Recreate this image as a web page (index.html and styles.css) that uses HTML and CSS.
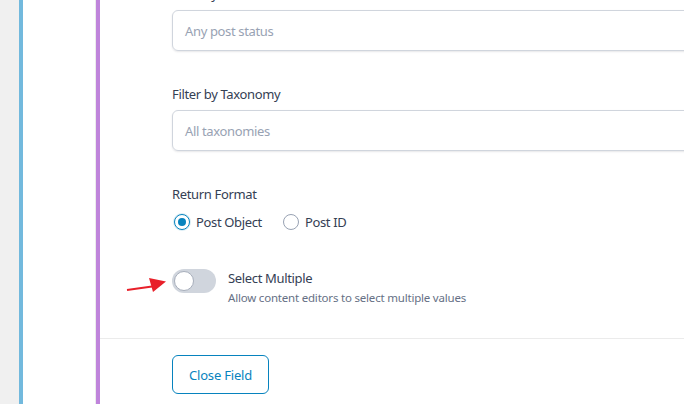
FILE: index.html
```html
<!DOCTYPE html>
<html>
<head>
<meta charset="utf-8">
<link rel="stylesheet" href="styles.css">
</head>
<body>
<div class="page">
  <div class="gutter"></div>
  <div class="outer">
    <div class="rail"></div>
    <div class="panel">
      <div class="fields">
        <div class="field first">
          <div class="label">Filter by Post Status</div>
          <div class="input">Any post status</div>
        </div>
        <div class="field tax">
          <div class="label">Filter by Taxonomy</div>
          <div class="input">All taxonomies</div>
        </div>
        <div class="field format">
          <div class="label">Return Format</div>
          <div class="radios">
            <label class="radio"><span class="dot on"></span>Post Object</label>
            <label class="radio"><span class="dot"></span>Post ID</label>
          </div>
        </div>
        <div class="field multi">
          <span class="toggle"><span class="knob"></span></span>
          <div class="multi-text">
            <div class="multi-title">Select Multiple</div>
            <div class="multi-desc">Allow content editors to select multiple values</div>
          </div>
          <svg class="arrow" width="42" height="20" viewBox="0 0 42 20">
            <path d="M1 15 L26 11.5" stroke="#e8202a" stroke-width="2" fill="none"/>
            <path d="M23 3 L40 6.5 L27 17 Z" fill="#e8202a"/>
          </svg>
        </div>
      </div>
      <div class="footer">
        <button class="close">Close Field</button>
      </div>
    </div>
  </div>
</div>
</body>
</html>
```

FILE: styles.css
```css
* { box-sizing: border-box; }
html, body { margin: 0; padding: 0; background: #fff; }
body {
  font-family: "Noto Sans", "Segoe UI", sans-serif;
  color: #344054;
  width: 684px;
  height: 404px;
  overflow: hidden;
}
.page { display: flex; height: 404px; }
.gutter { width: 19px; background: #f0f0f0; flex: none; }
.outer {
  flex: 1;
  display: flex;
  border-left: 4px solid #72b9dd;
}
.rail {
  width: 73px;
  flex: none;
  border-right: 1px solid #ececec;
}
.panel {
  flex: 1;
  border-left: 4px solid #bf84db;
  display: flex;
  flex-direction: column;
  min-width: 0;
}
.fields { padding-left: 72px; }
.field { position: relative; }
.label {
  font-size: 13px;
  letter-spacing: -0.35px;
  line-height: 20px;
  height: 20px;
}
.first { margin-top: -16px; }
.input {
  margin-top: 6px;
  height: 41px;
  width: 540px;
  border: 1px solid #d0d5dd;
  border-radius: 6px;
  box-shadow: 0 1px 2px rgba(16, 24, 40, 0.1);
  padding: 0 12px;
  font-size: 13px;
  letter-spacing: -0.35px;
  line-height: 40px;
  color: #98a2b3;
}
.tax { margin-top: 33px; }
.format { margin-top: 33px; }
.radios { display: flex; gap: 19px; margin-top: 8px; height: 20px; align-items: center; }
.radio { display: flex; align-items: center; font-size: 13px; letter-spacing: -0.35px; color: #344054; }
.dot {
  width: 16px; height: 16px;
  border: 1px solid #98a2b3;
  border-radius: 50%;
  margin: 0 6px 0 2px;
  background: #fff;
  position: relative;
}
.dot.on {
  border-color: #0783be;
  box-shadow: 0 0 0 1px rgba(7, 131, 190, 0.15);
}
.dot.on::after {
  content: "";
  position: absolute;
  left: 3px; top: 3px;
  width: 8px; height: 8px;
  border-radius: 50%;
  background: #0783be;
}
.multi {
  margin-top: 37px;
  display: flex;
  align-items: flex-start;
}
.toggle {
  width: 44px; height: 24px;
  border-radius: 12px;
  background: #d0d5dd;
  padding: 2px;
  flex: none;
}
.knob {
  display: block;
  width: 20px; height: 20px;
  border-radius: 50%;
  background: #fff;
  border: 1px solid #a7aebb;
}
.multi-text { margin-left: 12px; margin-top: -1px; }
.multi-title { font-size: 13px; letter-spacing: -0.35px; line-height: 20px; }
.multi-desc { font-size: 11.5px; letter-spacing: -0.2px; line-height: 19px; color: #667085; }
.arrow { position: absolute; left: -46px; top: 6px; }
.footer {
  margin-top: 31px;
  border-top: 1px solid #ebebeb;
  padding: 16px 0 0 72px;
}
.close {
  height: 39px;
  width: 97px;
  background: #fff;
  border: 1px solid #0783be;
  border-radius: 6px;
  color: #0783be;
  font-family: "Noto Sans", "Segoe UI", sans-serif;
  font-size: 13px;
  letter-spacing: -0.2px;
  padding: 0;
  cursor: pointer;
}
```
